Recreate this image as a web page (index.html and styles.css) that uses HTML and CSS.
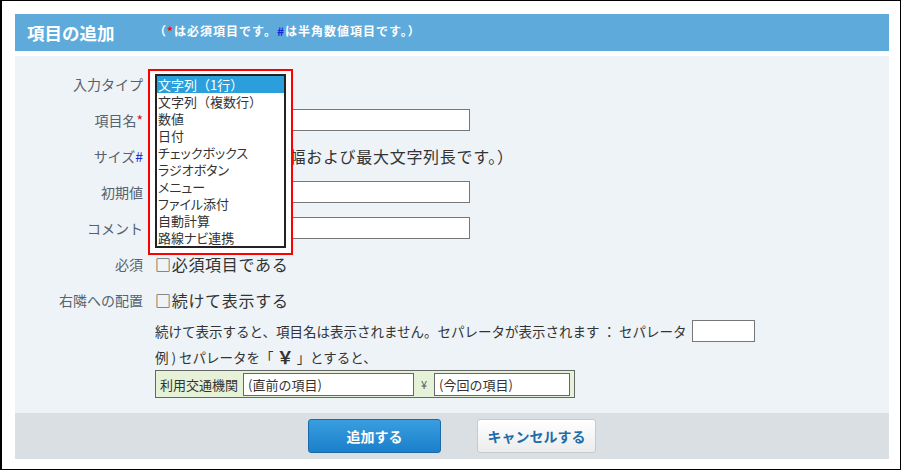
FILE: index.html
```html
<!DOCTYPE html>
<html lang="ja">
<head>
<meta charset="utf-8">
<link rel="stylesheet" href="styles.css">
</head>
<body>
<div class="frame">
  <div class="header">
    <span class="title">項目の追加</span>
    <span class="note">（<span class="req">*</span>は必須項目です。<span class="num">#</span>は半角数値項目です。）</span>
  </div>
  <div class="form">
    <div class="row">
      <div class="label">入力タイプ</div>
      <div class="field"></div>
    </div>
    <div class="row">
      <div class="label">項目名<span class="req">*</span></div>
      <div class="field"><span class="input wide"></span></div>
    </div>
    <div class="row">
      <div class="label">サイズ<span class="num">#</span></div>
      <div class="field"><span class="input small"></span><span class="big">（入力欄の幅および最大文字列長です。）</span></div>
    </div>
    <div class="row">
      <div class="label">初期値</div>
      <div class="field"><span class="input wide"></span></div>
    </div>
    <div class="row">
      <div class="label">コメント</div>
      <div class="field"><span class="input wide"></span></div>
    </div>
    <div class="row">
      <div class="label">必須</div>
      <div class="field"><span class="big">□必須項目である</span></div>
    </div>
    <div class="row top">
      <div class="label">右隣への配置</div>
      <div class="field col">
        <div class="line1"><span class="big">□続けて表示する</span></div>
        <div class="line2">続けて表示すると、項目名は表示されません。セパレータが表示されます ： セパレータ <span class="input sep"></span></div>
        <div class="line3">例 ) セパレータを「<b class="yen">￥</b>」とすると、</div>
        <div class="sample">
          <span class="sample-label">利用交通機関</span>
          <span class="input prev">(直前の項目)</span>
          <span class="yen-small">¥</span>
          <span class="input cur">(今回の項目)</span>
        </div>
      </div>
    </div>

    <div class="dropdown">
      <div class="listbox">
        <div class="opt sel">文字列（1行）</div>
        <div class="opt">文字列（複数行）</div>
        <div class="opt">数値</div>
        <div class="opt">日付</div>
        <div class="opt p">チェックボックス</div>
        <div class="opt p">ラジオボタン</div>
        <div class="opt p">メニュー</div>
        <div class="opt p">ファイル添付</div>
        <div class="opt">自動計算</div>
        <div class="opt p">路線ナビ連携</div>
      </div>
    </div>
  </div>
  <div class="footer">
    <span class="btn primary">追加する</span>
    <span class="btn secondary">キャンセルする</span>
  </div>
</div>
</body>
</html>
```

FILE: styles.css
```css
* { box-sizing: border-box; }
html, body { margin: 0; padding: 0; background: #fff; }
body {
  font-family: "Noto Sans CJK JP", "Noto Sans", "Liberation Sans", sans-serif;
  color: #333;
}
.frame {
  width: 901px;
  height: 470px;
  border: 1px solid #000;
  border-left-width: 2px;
  padding: 13px 11px 0 13px;
  display: flex;
  flex-direction: column;
}
.header {
  height: 37px;
  background: #5eabdb;
  color: #fff;
  display: flex;
  align-items: center;
  padding-left: 12px;
  font-weight: bold;
}
.title { font-size: 17.5px; line-height: 20px; width: 127px; }
.note { font-size: 12px; line-height: 14px; margin-top: -4px; letter-spacing: 1px; }
.note .req { color: #e0141e; }
.note .num { color: #1a23d6; }
.req { color: #e0141e; }
.num { color: #1a2bd6; }

.form {
  margin-top: 5px;
  height: 357px;
  background: #eef3f7;
  padding-top: 10px;
  position: relative;
}
.row {
  display: grid;
  grid-template-columns: 128px 1fr;
  column-gap: 12px;
  height: 36px;
  align-items: center;
}
.row.top { align-items: start; height: auto; }
.label {
  text-align: right;
  font-size: 14px;
  line-height: 18px;
  color: #56626d;
}
.row.top .label { line-height: 36px; }
.field { display: flex; align-items: center; font-size: 13px; }
.field.col { flex-direction: column; align-items: flex-start; }
.big { font-size: 16px; line-height: 20px; color: #333; letter-spacing: 0.7px; }
.input {
  display: inline-block;
  height: 22px;
  background: #fff;
  border: 1px solid #777;
}
.input.wide { width: 315px; }
.input.small { width: 48px; margin-right: 3px; }
.line1 { height: 36px; display: flex; align-items: center; }
.line2 { height: 26px; display: flex; align-items: center; font-size: 13.5px; line-height: 16px; color: #333; white-space: pre; }
.input.sep { width: 63px; margin-left: 2px; }
.line3 { height: 26px; display: flex; align-items: center; font-size: 13.5px; line-height: 16px; color: #333; }
.yen { font-size: 17px; margin: 0 3px; }
.sample {
  width: 420px;
  height: 28px;
  background: #e5f2d7;
  border: 1px solid #666;
  display: flex;
  align-items: center;
  padding-left: 4px;
  font-size: 13px;
}
.sample-label { width: 83px; color: #333; }
.input.prev, .input.cur {
  height: 23px;
  font-size: 13px;
  line-height: 21px;
  padding-left: 4px;
  color: #333;
  border-color: #666;
}
.input.prev { width: 171px; }
.yen-small { width: 20px; text-align: center; font-size: 11px; color: #555; }
.input.cur { width: 136px; }

.dropdown {
  position: absolute;
  left: 133px;
  top: 13px;
  width: 145px;
  height: 186px;
  border: 2px solid #ff0000;
  background: #fff;
  padding: 3px 4px 5px 5px;
}
.listbox {
  width: 131px;
  height: 174px;
  border: 2px solid #222;
  background: #fff;
}
.opt {
  height: 17px;
  line-height: 17px;
  font-size: 13px;
  padding-left: 1px;
  color: #333;
  white-space: nowrap;
}
.opt.p { font-feature-settings: "palt"; }
.opt.sel { background: #2a9fdc; color: #fff; }

.footer {
  height: 46px;
  background: #dadfe3;
  display: flex;
  justify-content: center;
  align-items: flex-start;
  padding-top: 6px;
  gap: 36px;
}
.btn {
  display: flex;
  align-items: center;
  justify-content: center;
  height: 34px;
  border-radius: 3px;
  font-size: 14px;
  font-weight: bold;
}
.btn.primary {
  width: 133px;
  color: #fff;
  background: linear-gradient(#3a9de0, #1a80ca);
  border: 1px solid #1b6aa6;
}
.btn.secondary {
  width: 119px;
  color: #1e6ca8;
  background: linear-gradient(#ffffff, #ececec);
  border: 1px solid #c5cacf;
}
```
